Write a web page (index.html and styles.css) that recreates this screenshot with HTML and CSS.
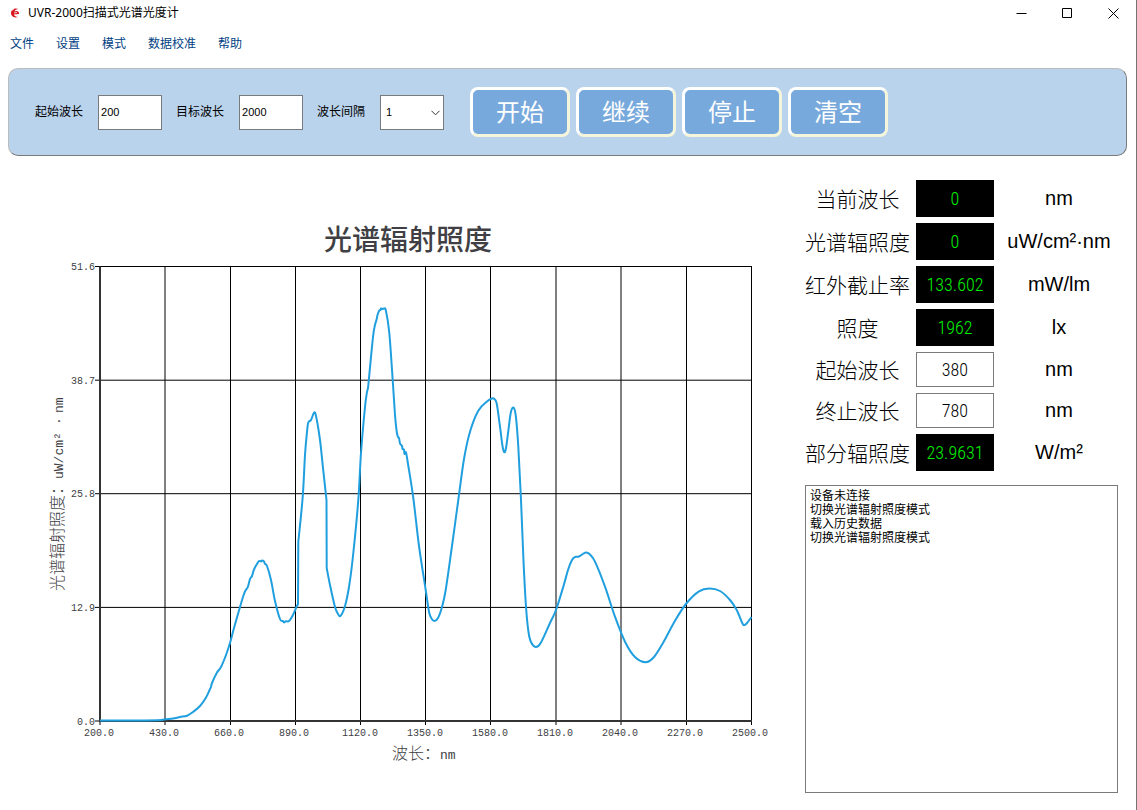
FILE: index.html
```html
<!DOCTYPE html>
<html lang="zh-CN">
<head>
<meta charset="utf-8">
<title>UVR-2000扫描式光谱光度计</title>
<link rel="stylesheet" href="styles.css">
</head>
<body>
<div class="window">
  <header class="titlebar">
    <svg class="logo" viewBox="0 0 10 12" aria-hidden="true">
      <path d="M8.500 2C5 .5 1.200 2 1 5.800c-.1 3.500 3.500 5.700 7 4.200C6 9.800 4.300 9 3.800 7.500L9 7C9.500 4.500 6.800 3.300 4.200 4.600 5 3 6.500 2.400 8.500 2Z" fill="#d9141e"/>
      <path d="M4 6l3-.5M2.200 3.200l1.600-1" stroke="#fff" stroke-width=".8"/>
    </svg>
    <h1 class="app-name">UVR-2000扫描式光谱光度计</h1>
    <div class="window-controls">
      <button class="control" type="button" aria-label="最小化"><svg viewBox="0 0 11 11"><path d="M.5 5.500h10"/></svg></button>
      <button class="control" type="button" aria-label="最大化"><svg viewBox="0 0 11 11"><path d="M.5.5h9v9h-9z"/></svg></button>
      <button class="control" type="button" aria-label="关闭"><svg viewBox="0 0 11 11"><path d="M.5.5l10 10M10.500.5l-10 10"/></svg></button>
    </div>
  </header>

  <nav class="menu">
    <a href="#file">文件</a>
    <a href="#settings">设置</a>
    <a href="#mode">模式</a>
    <a href="#calibration">数据校准</a>
    <a href="#help">帮助</a>
  </nav>

  <form class="toolbar">
    <div class="fields">
      <div class="field">
        <label for="start">起始波长</label>
        <input id="start" class="box" type="text" value="200">
      </div>
      <div class="field">
        <label for="target">目标波长</label>
        <input id="target" class="box" type="text" value="2000">
      </div>
      <div class="field">
        <label for="step">波长间隔</label>
        <div class="select">
          <select id="step" class="box"><option>1</option><option>2</option><option>5</option></select>
          <svg class="chevron" viewBox="0 0 9 6" aria-hidden="true"><path d="M.5.8l4 4 4-4"/></svg>
        </div>
      </div>
    </div>
    <div class="actions">
      <button class="action" type="button">开始</button>
      <button class="action" type="button">继续</button>
      <button class="action" type="button">停止</button>
      <button class="action" type="button">清空</button>
    </div>
  </form>

  <main class="content">
    <svg class="chart" viewBox="0 156 805 640" role="img" aria-label="光谱辐射照度">
      <text class="chart-title" x="408" y="250">光谱辐射照度</text>
      <path class="grid" d="M165 266.500V725M230.500 266.500V725M295.500 266.500V725M360.500 266.500V725M425.500 266.500V725M490.500 266.500V725M556 266.500V725M621 266.500V725M686.500 266.500V725M751.500 266.500V725M100 721V725M95 266.500H752M95 380.200H752M95 493.700H752M95 607.400H752M95 721H100"/>
      <path class="axis" d="M100 266.500V721H752"/>
      <path class="curve" id="curve"/>
      <g class="tick y-tick">
        <text x="95" y="270">51.6</text>
        <text x="95" y="384">38.7</text>
        <text x="95" y="497">25.8</text>
        <text x="95" y="611">12.9</text>
        <text x="95" y="725">0.0</text>
      </g>
      <g class="tick x-tick">
        <text x="99" y="736">200.0</text>
        <text x="164" y="736">430.0</text>
        <text x="229" y="736">660.0</text>
        <text x="294" y="736">890.0</text>
        <text x="360" y="736">1120.0</text>
        <text x="425" y="736">1350.0</text>
        <text x="490" y="736">1580.0</text>
        <text x="555" y="736">1810.0</text>
        <text x="620" y="736">2040.0</text>
        <text x="685" y="736">2270.0</text>
        <text x="750" y="736">2500.0</text>
      </g>
      <text class="axis-title" x="392" y="759">波长：<tspan class="unit-text">nm</tspan></text>
      <text class="axis-title" transform="translate(63 591) rotate(-90)">光谱辐射照度：<tspan class="unit-text">uW/cm²</tspan><tspan class="unit-text" x="166">·</tspan><tspan class="unit-text" x="178">nm</tspan></text>
    </svg>

    <aside class="side">
      <div class="readings">
        <label for="current">当前波长</label><output id="current" class="led">0</output><span class="unit">nm</span>
        <label for="spectral">光谱辐照度</label><output id="spectral" class="led">0</output><span class="unit">uW/cm²·nm</span>
        <label for="cutoff">红外截止率</label><output id="cutoff" class="led">133.602</output><span class="unit">mW/lm</span>
        <label for="lux">照度</label><output id="lux" class="led">1962</output><span class="unit">lx</span>
        <label for="from">起始波长</label><input id="from" class="value" type="text" value="380"><span class="unit">nm</span>
        <label for="to">终止波长</label><input id="to" class="value" type="text" value="780"><span class="unit">nm</span>
        <label for="partial">部分辐照度</label><output id="partial" class="led">23.9631</output><span class="unit">W/m²</span>
      </div>
      <ul class="log">
        <li>设备未连接</li>
        <li>切换光谱辐射照度模式</li>
        <li>载入历史数据</li>
        <li>切换光谱辐射照度模式</li>
      </ul>
    </aside>
  </main>
</div>
<script src="chart.js"></script>
</body>
</html>
```

FILE: styles.css
```css
* { box-sizing: border-box; }

body {
  margin: 0;
  background: #fff;
  color: #000;
  font: 12px/14px "Noto Sans", "Noto Sans CJK SC", sans-serif;
}

button, input, select { font: inherit; color: inherit; }

.window {
  display: flex;
  flex-direction: column;
  min-height: 100vh;
  border-right: 1px solid #737373;
}

.titlebar {
  display: flex;
  align-items: center;
  height: 26px;
  padding-left: 10px;
}
.logo { width: 10px; height: 12px; }
.app-name {
  margin: 0 auto 0 8px;
  font-size: 12px;
  font-weight: 400;
  line-height: 16px;
}
.window-controls { display: flex; }
.control {
  display: grid;
  place-items: center;
  width: 46px;
  height: 26px;
  padding: 0;
  border: 0;
  background: none;
}
.control svg {
  width: 11px;
  height: 11px;
  fill: none;
  stroke: #000;
}

.menu {
  display: flex;
  gap: 22px;
  padding: 10px;
  line-height: 16px;
}
.menu a { color: #004183; text-decoration: none; }

.toolbar {
  display: flex;
  align-items: center;
  gap: 26px;
  margin: 6px 9px 0 8px;
  padding: 18px 26px;
  border: 1px solid;
  border-color: #bcbcbc #7b7b7b #7b7b7b #bcbcbc;
  border-radius: 10px;
  background: #bad3ec;
}
.fields { display: flex; gap: 14px; }
.field { display: flex; align-items: center; gap: 15px; }
.box {
  display: block;
  width: 64px;
  height: 35px;
  padding: 0 2px;
  border: 1px solid #7a7a7a;
  border-radius: 0;
  background: #fff;
  font-family: "Liberation Sans", Arial, sans-serif;
  font-size: 11px;
}
.select { position: relative; }
.select .box { appearance: none; padding-left: 5px; }
.chevron {
  position: absolute;
  top: 15px;
  right: 4px;
  width: 9px;
  height: 6px;
  fill: none;
  stroke: #333;
  pointer-events: none;
}

.actions { display: flex; gap: 6px; }
.action {
  width: 100px;
  height: 50px;
  padding: 0;
  border: 3px solid;
  border-color: #fff #f5f5dc #f5f5dc #fff;
  border-radius: 8px;
  background: #78a9dc;
  color: #fff;
  font-size: 24px;
  font-weight: 400;
  line-height: 40px;
}

.content {
  flex: 1;
  display: grid;
  grid-template-columns: minmax(0, 1fr) 313px;
  padding-right: 18px;
}
.chart { display: block; width: 100%; height: auto; }
.grid { fill: none; stroke: #000; stroke-width: 1; }
.axis { fill: none; stroke: #333; stroke-width: 2; }
.curve {
  fill: none;
  stroke: #209fdf;
  stroke-width: 2;
  stroke-linejoin: round;
}
.chart-title {
  fill: #404044;
  font-size: 28px;
  font-weight: 500;
  text-anchor: middle;
}
.tick { fill: #404044; font: 10px "Liberation Mono", monospace; }
.y-tick { text-anchor: end; }
.x-tick { text-anchor: middle; }
.axis-title { fill: #404044; font-size: 16px; font-weight: 300; }
.unit-text { font: 13px "Liberation Mono", monospace; }

.side {
  display: flex;
  flex-direction: column;
  gap: 14px;
  padding: 24px 0 17px;
}
.readings {
  display: grid;
  grid-template-columns: 105px 78px 1fr;
  gap: 6px;
  align-items: center;
  text-align: center;
}
.readings label {
  font-size: 21px;
  font-weight: 300;
  line-height: 30px;
  white-space: nowrap;
}
.led, .value {
  width: 100%;
  height: 37px;
  padding: 0;
  background: #000;
  color: #00f000;
  font: 300 18px/38px "Roboto Condensed", "Liberation Sans Narrow", "DejaVu Sans Condensed", sans-serif;
  text-align: center;
}
.value {
  height: 35px;
  border: 1px solid #7a7a7a;
  background: #fff;
  color: #000;
}
.unit {
  padding-bottom: 2px;
  font: 20px/30px "Liberation Sans", Arial, sans-serif;
}
.log {
  flex: 1;
  margin: 0;
  padding: 3px 4px;
  border: 1px solid #7a7a7a;
  font-family: "Liberation Sans", "Noto Sans CJK SC", sans-serif;
  list-style: none;
}
```

FILE: chart.js
```js
const runs = [
  [[100,720.4],[130,720.4],[158,720.2],[166,719.2],[173,718.6],[180,717],[187,715.7],[193,712],[200,706],[206,697.500],[210,689],[211,687],[212,683],[217,672.500],[221,667],[226,655],[230,643],[234,628],[240,607],[243,597],[245,591.500],[248,586.500],[250,579],[252,576],[254,569.500],[257,564],[259,561],[261,561.500],[262,560.500],[264,561.500],[265,564],[267,566],[271,580],[275,601],[280,619],[283,621],[284,622.500],[286,621.300],[289,621],[293,615],[296,608],[298,604]],
  [[298.3,542],[302.700,497],[305,455],[307,432],[308.300,422.500],[311,420],[314,412.800],[316,416],[320,440],[323,468],[326.500,500]],
  [[326.700,568],[330,585],[335,607],[338,614],[340.700,615.700],[345,606],[349,587],[353,556],[358.300,500],[361,453],[365,407],[367,392],[368,388],[369,378],[373,337],[375,325],[376.700,319],[377.500,315],[379.300,310.500],[380.500,310],[381,308.500],[383,309],[384,308.500],[386,311],[389.300,333],[392.700,380],[395,415],[396.700,431.500],[398,437],[399,438],[400,443.500],[402,446],[402.500,449],[404,449.500],[404.500,454],[406,452.500],[408,464],[413.300,498],[419,546],[425.700,590],[429,611.700],[431.500,618.500],[434.300,621],[438,618],[442,607],[445.700,590],[452,546],[458.300,500],[464,459],[470,431.700],[478.300,410.700],[486.700,401.700],[492,398.500],[494,398.800],[496.700,403.500],[500,426.700],[502.500,446],[504.300,452.300],[506,448],[508.300,431],[510.700,413],[513.300,407.500],[515.700,415],[518.300,446.700],[521,500],[523.500,561],[526,606.700],[528.500,632],[531,642],[535.700,647],[540.700,643],[550,623],[556,610],[563.300,586.700],[568,570],[572,560],[575,557],[579,556.500],[585.700,552.500],[590,554.500],[595,561.700],[605,586.700],[615,616.700],[625,641.700],[635,657],[645.700,662.200],[654,657],[663,643],[675,620.700],[686.700,603],[699,591.300],[709.300,588.500],[720,591],[730,600],[736.700,610],[742.500,623.500],[744.500,625],[747,623],[751.500,617]]
];

// Catmull-Rom spline through one run, written as cubic segments.
function spline(points) {
  let d = points[0].join(" ");
  for (let i = 0; i < points.length - 1; i++) {
    const p = points[i - 1] || points[i];
    const a = points[i];
    const b = points[i + 1];
    const n = points[i + 2] || b;
    d += ` C${a[0] + (b[0] - p[0]) / 6} ${a[1] + (b[1] - p[1]) / 6}`
       + ` ${b[0] - (n[0] - a[0]) / 6} ${b[1] - (n[1] - a[1]) / 6} ${b[0]} ${b[1]}`;
  }
  return d;
}

document.getElementById("curve").setAttribute("d", "M" + runs.map(spline).join(" L"));
```
